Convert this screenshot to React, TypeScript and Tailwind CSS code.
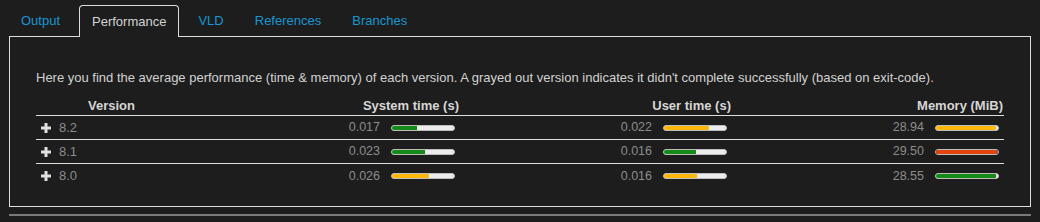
import { useState } from 'react';

type Bar = { value: string; pct: number; color: string };
type Row = { version: string; sys: Bar; user: Bar; mem: Bar };

const GREEN = '#168a16';
const YELLOW = '#ffb908';
const RED = '#e0440a';

const rows: Row[] = [
  {
    version: '8.2',
    sys: { value: '0.017', pct: 40, color: GREEN },
    user: { value: '0.022', pct: 73, color: YELLOW },
    mem: { value: '28.94', pct: 97, color: YELLOW },
  },
  {
    version: '8.1',
    sys: { value: '0.023', pct: 53, color: GREEN },
    user: { value: '0.016', pct: 52, color: GREEN },
    mem: { value: '29.50', pct: 100, color: RED },
  },
  {
    version: '8.0',
    sys: { value: '0.026', pct: 60, color: YELLOW },
    user: { value: '0.016', pct: 54, color: YELLOW },
    mem: { value: '28.55', pct: 97, color: GREEN },
  },
];

const tabs = ['Output', 'Performance', 'VLD', 'References', 'Branches'];

export default function App() {
  const [active, setActive] = useState('Performance');

  return (
    <div
      className="w-[1040px] h-[222px] bg-[#1d1d1d] pt-[5px] px-[9px] overflow-hidden"
      style={{ fontFamily: '"Liberation Sans", Arial, sans-serif' }}
    >
      {/* Tabs */}
      <div className="flex h-[31px] items-stretch gap-[7px]">
        {tabs.map((t) => (
          <button
            key={t}
            onClick={() => setActive(t)}
            className={
              t === active
                ? 'relative z-10 -mb-px px-[12px] text-[13px] text-[#d4d4d4] bg-[#1d1d1d] border border-b-0 border-[#dcdcdc] rounded-t-[4px] leading-none'
                : 'px-[12px] text-[13px] text-[#1996d2] leading-none'
            }
          >
            {t}
          </button>
        ))}
      </div>

      {/* Panel */}
      <div className="border border-[#dcdcdc] h-[171px] pt-[33px] px-[26px]">
        <p className="text-[13px] leading-[15px] text-[#d2d2d2] whitespace-nowrap">
          Here you find the average performance (time &amp; memory) of each version. A grayed out version indicates it didn't complete successfully (based on exit-code).
        </p>

        <div className="mt-[12px] w-[968px]">
          <div className="grid grid-cols-[151px_272px_272px_272px] h-[19px] border-b border-[#dcdcdc] text-[13px] font-bold text-[#d6d6d6] leading-[15px] items-end pb-[2px]">
            <div className="text-center">Version</div>
            <div className="text-right">System time (s)</div>
            <div className="text-right">User time (s)</div>
            <div className="text-right">Memory (MiB)</div>
          </div>
          {rows.map((r, i) => (
            <div
              key={r.version}
              className={
                'grid grid-cols-[151px_272px_272px_272px] h-[24px] items-center text-[12.5px] text-[#8c8c8c] ' +
                (i < rows.length - 1 ? 'border-b border-[#dcdcdc]' : '')
              }
            >
              <div className="flex items-center pl-[5px]">
                <PlusIcon />
                <span className="ml-[8px] text-[13px]">{r.version}</span>
              </div>
              <Cell bar={r.sys} />
              <Cell bar={r.user} />
              <Cell bar={r.mem} />
            </div>
          ))}
        </div>
      </div>

      <div className="mt-[7px] h-[2px] bg-[#7a7a7a]" />
    </div>
  );
}

function Cell({ bar }: { bar: Bar }) {
  return (
    <div className="flex items-center justify-end pr-[4px]">
      <span>{bar.value}</span>
      <div className="ml-[11px] w-[64px] h-[6px] rounded-full bg-[#ececec] border border-[#bdbdbd] overflow-hidden">
        <div className="h-full" style={{ width: `${bar.pct}%`, backgroundColor: bar.color }} />
      </div>
    </div>
  );
}

function PlusIcon() {
  return (
    <svg width="10" height="10" viewBox="0 0 10 10">
      <rect x="3.5" y="0" width="3" height="10" fill="#e0e0e0" />
      <rect x="0" y="3.5" width="10" height="3" fill="#e0e0e0" />
    </svg>
  );
}
